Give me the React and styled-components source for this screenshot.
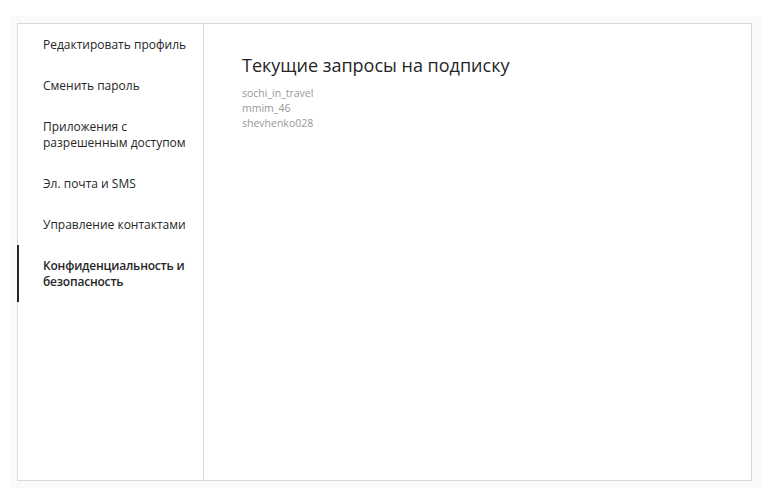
import React from "react";
import styled, { createGlobalStyle } from "styled-components";

const GlobalStyle = createGlobalStyle`
  body {
    margin: 0;
    background: #ffffff;
    font-family: "Open Sans", "Noto Sans", sans-serif;
    color: #262626;
  }
`;

// Layout
const Page = styled.div`
  padding: 16px 6px 4px 10px;
`;

const Backdrop = styled.div`
  background: #fafafa;
  padding: 7px 10px 7px 7px;
`;

const Card = styled.div`
  display: flex;
  height: 458px;
  box-sizing: border-box;
  background: #ffffff;
  border: 1px solid #dbdbdb;
`;

const Sidebar = styled.nav`
  width: 185px;
  flex-shrink: 0;
  border-right: 1px solid #dbdbdb;
  padding-top: 0;
`;

const NavItem = styled.div`
  margin-left: -1px;
  padding: 12.5px 12px 12.5px 24px;
  font-size: 12px;
  line-height: 16px;
  color: #262626;
  font-weight: ${(p) => (p.$active ? 600 : 400)};
  letter-spacing: ${(p) => (p.$active ? "-0.2px" : "0")};
  border-left: 2px solid ${(p) => (p.$active ? "#262626" : "transparent")};
`;

const Main = styled.main`
  flex: 1;
  padding: 29px 38px;
`;

const Title = styled.h1`
  margin: 0 0 9px 0;
  font-size: 18px;
  font-weight: 400;
  line-height: 24px;
  color: #262626;
`;

const UserList = styled.div`
  display: flex;
  flex-direction: column;
`;

const User = styled.div`
  font-size: 10.5px;
  line-height: 15px;
  color: #999999;
`;

// Data
const navItems = [
  { label: "Редактировать профиль" },
  { label: "Сменить пароль" },
  { label: "Приложения с разрешенным доступом" },
  { label: "Эл. почта и SMS" },
  { label: "Управление контактами" },
  { label: "Конфиденциальность и безопасность", active: true },
];

const users = ["sochi_in_travel", "mmim_46", "shevhenko028"];

export default function App() {
  return (
    <Page>
      <GlobalStyle />
      <Backdrop>
        <Card>
          <Sidebar>
            {navItems.map((item) => (
              <NavItem key={item.label} $active={item.active}>
                {item.label}
              </NavItem>
            ))}
          </Sidebar>
          <Main>
            <Title>Текущие запросы на подписку</Title>
            <UserList>
              {users.map((u) => (
                <User key={u}>{u}</User>
              ))}
            </UserList>
          </Main>
        </Card>
      </Backdrop>
    </Page>
  );
}
